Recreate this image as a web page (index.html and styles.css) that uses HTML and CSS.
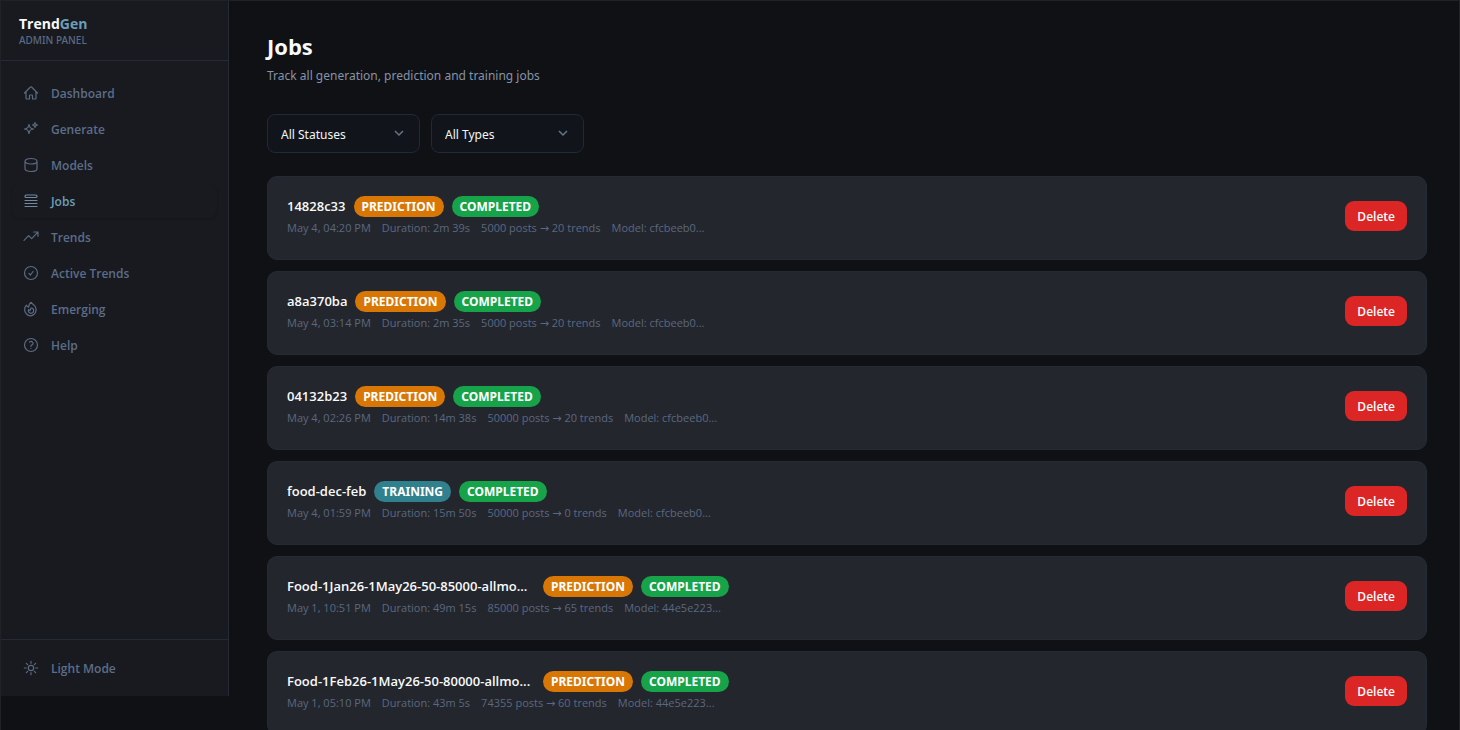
FILE: index.html
```html
<!DOCTYPE html>
<html lang="en">
<head>
<meta charset="utf-8">
<title>TrendGen Admin Panel</title>
<link rel="stylesheet" href="styles.css">
</head>
<body>
<div class="app">
  <aside class="sidebar">
    <div class="brand">
      <div class="brand-name">Trend<span class="brand-accent">Gen</span></div>
      <div class="brand-sub">ADMIN PANEL</div>
    </div>
    <nav class="nav">
      <a class="nav-item" href="#"><svg class="icon" viewBox="0 0 24 24"><path d="m2.25 12 8.954-8.955c.44-.439 1.152-.439 1.591 0L21.75 12M4.5 9.75v10.125c0 .621.504 1.125 1.125 1.125H9.75v-4.875c0-.621.504-1.125 1.125-1.125h2.25c.621 0 1.125.504 1.125 1.125V21h4.125c.621 0 1.125-.504 1.125-1.125V9.75"/></svg>Dashboard</a>
      <a class="nav-item" href="#"><svg class="icon" viewBox="0 0 24 24"><path d="M9.813 15.904 9 18.75l-.813-2.846a4.5 4.5 0 0 0-3.09-3.09L2.25 12l2.846-.813a4.5 4.5 0 0 0 3.09-3.09L9 5.25l.813 2.846a4.5 4.5 0 0 0 3.09 3.09L15.75 12l-2.846.813a4.5 4.5 0 0 0-3.09 3.09ZM18.259 8.715 18 9.75l-.259-1.035a3.375 3.375 0 0 0-2.455-2.456L14.25 6l1.036-.259a3.375 3.375 0 0 0 2.455-2.456L18 2.25l.259 1.035a3.375 3.375 0 0 0 2.456 2.456L21.75 6l-1.035.259a3.375 3.375 0 0 0-2.456 2.456Z"/></svg>Generate</a>
      <a class="nav-item" href="#"><svg class="icon" viewBox="0 0 24 24"><path d="M21 6.375c0 2.692-4.03 4.125-9 4.125S3 9.067 3 6.375m18 0c0-2.692-4.03-4.125-9-4.125S3 3.683 3 6.375m18 0v11.25c0 2.692-4.03 4.125-9 4.125s-9-1.433-9-4.125V6.375"/></svg>Models</a>
      <a class="nav-item nav-item-active" href="#" aria-current="page"><svg class="icon" viewBox="0 0 24 24"><path d="M3 11.25h18M3 15.75h18M3 20.25h18M4.875 3h14.25a1.875 1.875 0 0 1 0 3.75H4.875a1.875 1.875 0 0 1 0-3.75Z"/></svg>Jobs</a>
      <a class="nav-item" href="#"><svg class="icon" viewBox="0 0 24 24"><path d="M1.5 17 8.5 10l4.5 4.5L22 5M16 4.5h6.5V11"/></svg>Trends</a>
      <a class="nav-item" href="#"><svg class="icon" viewBox="0 0 24 24"><path d="M9 12.75 11.25 15 15 9.75M21.75 12a9.75 9.75 0 1 1-19.5 0 9.75 9.75 0 0 1 19.5 0Z"/></svg>Active Trends</a>
      <a class="nav-item" href="#"><svg class="icon" viewBox="0 0 24 24"><path d="M15.5 5.2A9.4 9.4 0 0 1 12 22.2 9.4 9.4 0 0 1 5.2 6.3 8.287 8.287 0 0 0 8.4 9.2a8.983 8.983 0 0 1 3.7-7.2 8.21 8.21 0 0 0 3.4 3.2Z"/><path d="M12 18.5a4 4 0 0 0 .495-7.968 5.99 5.99 0 0 0-1.925 3.547 5.975 5.975 0 0 1-2.333-1.001A4 4 0 0 0 12 18.500Z"/></svg>Emerging</a>
      <a class="nav-item" href="#"><svg class="icon" viewBox="0 0 24 24"><path d="M9.879 7.519c1.171-1.025 3.071-1.025 4.242 0 1.172 1.025 1.172 2.687 0 3.712-.203.179-.43.326-.67.442-.745.361-1.45.999-1.45 1.827v.75M21.75 12a9.75 9.75 0 1 1-19.5 0 9.75 9.75 0 0 1 19.5 0ZM12 17.25h.008v.008H12v-.008Z"/></svg>Help</a>
    </nav>
    <div class="sidebar-foot">
      <button class="nav-item" type="button"><svg class="icon" viewBox="0 0 24 24"><path d="M12 2v3M19 5l-2 2M22 12h-3M19 19l-2-2M12 19v3M7 17l-2 2M5 12H2M7 7 5 5M16 12a4 4 0 1 1-8 0 4 4 0 0 1 8 0Z"/></svg>Light Mode</button>
    </div>
  </aside>
  <main class="main">
    <h1 class="title">Jobs</h1>
    <p class="subtitle">Track all generation, prediction and training jobs</p>
    <div class="filters">
      <div class="select-wrap">
        <select class="select" aria-label="Status"><option>All Statuses</option></select>
        <svg class="chevron" viewBox="0 0 12 12"><path d="m2 4 4 4 4-4"/></svg>
      </div>
      <div class="select-wrap">
        <select class="select" aria-label="Type"><option>All Types</option></select>
        <svg class="chevron" viewBox="0 0 12 12"><path d="m2 4 4 4 4-4"/></svg>
      </div>
    </div>
    <ul class="jobs">
      <li class="job">
        <div class="job-info">
          <div class="job-head"><span class="job-name">14828c33</span><span class="badge badge-prediction">PREDICTION</span><span class="badge badge-completed">COMPLETED</span></div>
          <div class="job-meta"><span>May 4, 04:20 PM</span><span>Duration: 2m 39s</span><span>5000 posts → 20 trends</span><span>Model: cfcbeeb0...</span></div>
        </div>
        <button class="delete" type="button">Delete</button>
      </li>
      <li class="job">
        <div class="job-info">
          <div class="job-head"><span class="job-name">a8a370ba</span><span class="badge badge-prediction">PREDICTION</span><span class="badge badge-completed">COMPLETED</span></div>
          <div class="job-meta"><span>May 4, 03:14 PM</span><span>Duration: 2m 35s</span><span>5000 posts → 20 trends</span><span>Model: cfcbeeb0...</span></div>
        </div>
        <button class="delete" type="button">Delete</button>
      </li>
      <li class="job">
        <div class="job-info">
          <div class="job-head"><span class="job-name">04132b23</span><span class="badge badge-prediction">PREDICTION</span><span class="badge badge-completed">COMPLETED</span></div>
          <div class="job-meta"><span>May 4, 02:26 PM</span><span>Duration: 14m 38s</span><span>50000 posts → 20 trends</span><span>Model: cfcbeeb0...</span></div>
        </div>
        <button class="delete" type="button">Delete</button>
      </li>
      <li class="job">
        <div class="job-info">
          <div class="job-head"><span class="job-name">food-dec-feb</span><span class="badge badge-training">TRAINING</span><span class="badge badge-completed">COMPLETED</span></div>
          <div class="job-meta"><span>May 4, 01:59 PM</span><span>Duration: 15m 50s</span><span>50000 posts → 0 trends</span><span>Model: cfcbeeb0...</span></div>
        </div>
        <button class="delete" type="button">Delete</button>
      </li>
      <li class="job">
        <div class="job-info">
          <div class="job-head"><span class="job-name job-name-long">Food-1Jan26-1May26-50-85000-allmo...</span><span class="badge badge-prediction">PREDICTION</span><span class="badge badge-completed">COMPLETED</span></div>
          <div class="job-meta"><span>May 1, 10:51 PM</span><span>Duration: 49m 15s</span><span>85000 posts → 65 trends</span><span>Model: 44e5e223...</span></div>
        </div>
        <button class="delete" type="button">Delete</button>
      </li>
      <li class="job">
        <div class="job-info">
          <div class="job-head"><span class="job-name job-name-long">Food-1Feb26-1May26-50-80000-allmo...</span><span class="badge badge-prediction">PREDICTION</span><span class="badge badge-completed">COMPLETED</span></div>
          <div class="job-meta"><span>May 1, 05:10 PM</span><span>Duration: 43m 5s</span><span>74355 posts → 60 trends</span><span>Model: 44e5e223...</span></div>
        </div>
        <button class="delete" type="button">Delete</button>
      </li>
    </ul>
  </main>
</div>
</body>
</html>
```
FILE: styles.css
```css
* { box-sizing: border-box; }
body {
  margin: 0;
  background: #101114;
  color: #f8fafc;
  font-family: "Open Sans", "DejaVu Sans", sans-serif;
  font-size: 12px;
}
.app {
  display: flex;
  align-items: flex-start;
  height: 100vh;
  overflow: hidden;
  border: 1px solid #202226;
  border-bottom: 0;
}
.sidebar {
  display: flex;
  flex-direction: column;
  flex: none;
  width: 228px;
  height: calc(100vh - 35px);
  background: #181a20;
  border-right: 1px solid #232b37;
}
.brand {
  height: 60px;
  padding: 13px 18px;
  border-bottom: 1px solid #232b37;
}
.brand-name { font-size: 14px; line-height: 20px; font-weight: 700; }
.brand-accent { color: #6b9fb8; }
.brand-sub {
  font-family: "Noto Sans", sans-serif;
  font-size: 10px;
  line-height: 12px;
  font-weight: 500;
  color: #5a6b85;
}
.nav {
  display: flex;
  flex-direction: column;
  flex: 1;
  gap: 2px;
  padding: 15px 11px;
}
.nav-item {
  display: flex;
  align-items: center;
  gap: 12px;
  width: 100%;
  height: 34px;
  padding: 0 11px;
  border: 0;
  border-radius: 8px;
  background: none;
  color: #5c6d88;
  font: 600 12px "Open Sans", "Noto Sans", sans-serif;
  text-decoration: none;
}
.nav-item-active { color: #6b9fb8; box-shadow: 0 1px 2px #14161b; }
.icon {
  flex: none;
  width: 16px;
  height: 16px;
  fill: none;
  stroke: #5c6b80;
  stroke-width: 1.8;
  stroke-linecap: round;
  stroke-linejoin: round;
}
.nav-item-active .icon { stroke: #7089a0; }
.sidebar-foot { padding: 11px; border-top: 1px solid #232b37; }
.main { flex: 1; min-width: 0; padding: 30px 32px 0 38px; }
.title { margin: 0; font-size: 22px; line-height: 30px; font-weight: 700; }
.subtitle {
  margin: 5px 0 0;
  font-family: "Noto Sans", sans-serif;
  font-size: 12px;
  line-height: 20px;
  color: #8593a8;
}
.filters { display: flex; gap: 11px; margin: 28px 0 23px; }
.select-wrap { position: relative; width: 153px; }
.select {
  display: block;
  appearance: none;
  width: 100%;
  height: 39px;
  padding: 2px 32px 0 13px;
  border: 1px solid #202936;
  border-radius: 8px;
  background: #11151b;
  color: #f1f5f9;
  font: 400 12px "Noto Sans", sans-serif;
}
.chevron {
  position: absolute;
  right: 15px;
  top: 13px;
  width: 12px;
  height: 12px;
  fill: none;
  stroke: #64748b;
  stroke-width: 1.5;
  pointer-events: none;
}
.jobs {
  display: flex;
  flex-direction: column;
  gap: 11px;
  margin: 0;
  padding: 0;
  list-style: none;
}
.job {
  display: flex;
  align-items: center;
  justify-content: space-between;
  padding: 19px 19px 23px;
  border: 1px solid #232b37;
  border-radius: 10px;
  background: #24262d;
}
.job-head { display: flex; align-items: center; gap: 8px; height: 21px; }
.job-name { font-size: 13px; line-height: 21px; font-weight: 600; white-space: nowrap; }
.job-name-long { width: 248px; }
.badge {
  padding: 0 8px;
  border-radius: 11px;
  font-family: "Noto Sans", sans-serif;
  font-size: 12px;
  line-height: 21px;
  font-weight: 700;
  color: #fff;
}
.badge-prediction { background: #d97706; }
.badge-completed { background: #16a34a; }
.badge-training { background: #31808e; }
.job-meta {
  display: flex;
  gap: 11px;
  font-size: 11px;
  line-height: 19px;
  height: 19px;
  padding-top: 1px;
  color: #5a6880;
}
.delete {
  height: 30px;
  padding: 0 12px;
  border: 0;
  border-radius: 9px;
  background: #dc2626;
  color: #fff;
  font: 600 12px "Open Sans", "Noto Sans", sans-serif;
}
```
